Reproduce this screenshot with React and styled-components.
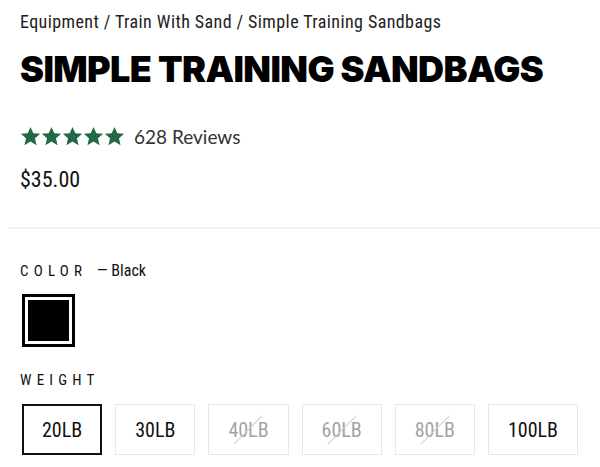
import React from 'react';
import styled, { createGlobalStyle } from 'styled-components';

const GlobalStyle = createGlobalStyle`
  body {
    margin: 0;
    background: #fff;
    color: #111;
    overflow: hidden;
  }
`;

const product = {
  crumbs: ['Equipment', 'Train With Sand', 'Simple Training Sandbags'],
  title: 'Simple Training Sandbags',
  reviews: 628,
  price: '$35.00',
  color: 'Black',
  weights: [
    { label: '20LB', selected: true },
    { label: '30LB' },
    { label: '40LB', soldOut: true },
    { label: '60LB', soldOut: true },
    { label: '80LB', soldOut: true },
    { label: '100LB' }
  ]
};

const Star = () => (
  <svg width="21" height="21" viewBox="0 0 24 24">
    <path
      fill="#216a45"
      d="M12 1l3.2 7.3 7.9.6-6 5.2 1.8 7.9L12 17.8 5.1 22l1.8-7.9-6-5.2 7.9-.6z"
    />
  </svg>
);

const App = () => {
  return (
    <Page>
      <GlobalStyle />
      <Breadcrumb>{product.crumbs.join(' / ')}</Breadcrumb>
      <Title>{product.title}</Title>
      <Rating>
        <Stars>
          {[0, 1, 2, 3, 4].map((i) => (
            <Star key={i} />
          ))}
        </Stars>
        <ReviewCount>{product.reviews} Reviews</ReviewCount>
      </Rating>
      <Price>{product.price}</Price>
      <Divider />
      <OptionLabel $top={33}>
        Color <OptionValue>— {product.color}</OptionValue>
      </OptionLabel>
      <Swatch>
        <SwatchFill />
      </Swatch>
      <OptionLabel $top={24}>Weight</OptionLabel>
      <WeightRow>
        {product.weights.map((w) => (
          <WeightButton key={w.label} $selected={w.selected} $soldOut={w.soldOut}>
            {w.label}
          </WeightButton>
        ))}
      </WeightRow>
    </Page>
  );
};

export default App;

const Page = styled.div`
  padding: 12px 0 0 20px;
  font-family: 'Roboto Condensed', 'Liberation Sans Narrow', Roboto, sans-serif;
`;

const Breadcrumb = styled.div`
  font-size: 18px;
  color: #222;
  line-height: 20px;
  letter-spacing: 0.4px;
`;

const Title = styled.h1`
  margin: 14px 0 0;
  font-family: Inter, 'DejaVu Sans', sans-serif;
  font-weight: 900;
  font-size: 36px;
  line-height: 46px;
  letter-spacing: -0.6px;
  text-transform: uppercase;
  color: #000;
`;

const Rating = styled.div`
  display: flex;
  align-items: center;
  margin-top: 33px;
`;

const Stars = styled.div`
  display: flex;
  margin-right: 9px;
`;

const ReviewCount = styled.span`
  font-family: Lato, sans-serif;
  font-size: 19px;
  color: #333;
`;

const Price = styled.div`
  margin-top: 19px;
  font-size: 22px;
  line-height: 26px;
  color: #111;
`;

const Divider = styled.div`
  height: 2px;
  background: #f1f0eb;
  margin: 34px 0 0 -12px;
`;

const OptionLabel = styled.div`
  margin-top: ${(p) => p.$top}px;
  font-size: 15px;
  line-height: 18px;
  letter-spacing: 5.2px;
  text-transform: uppercase;
  color: #111;
`;

const OptionValue = styled.span`
  margin-left: 1px;
  letter-spacing: 0;
  text-transform: none;
  font-size: 16px;
`;

const Swatch = styled.div`
  width: 53px;
  height: 53px;
  box-sizing: border-box;
  margin: 14px 0 0 2px;
  border: 3px solid #000;
  padding: 3px;
  background: #fff;
`;

const SwatchFill = styled.div`
  width: 100%;
  height: 100%;
  background: #000;
`;

const WeightRow = styled.div`
  display: flex;
  gap: 13px;
  margin: 15px 0 0 2px;
`;

const WeightButton = styled.div`
  position: relative;
  box-sizing: border-box;
  height: 51px;
  padding: 0 ${(p) => (p.$selected ? 18 : 19)}px;
  display: flex;
  align-items: center;
  justify-content: center;
  font-size: 20px;
  border: ${(p) => (p.$selected ? '2px solid #111' : '1px solid #e9e7e0')};
  color: ${(p) => (p.$soldOut ? '#a3a3a3' : '#111')};
  &::after {
    content: '';
    display: ${(p) => (p.$soldOut ? 'block' : 'none')};
    position: absolute;
    left: 50%;
    top: 50%;
    width: 40px;
    height: 1px;
    background: #cfcfcf;
    transform: translate(-50%, -50%) rotate(-45deg);
  }
`;
